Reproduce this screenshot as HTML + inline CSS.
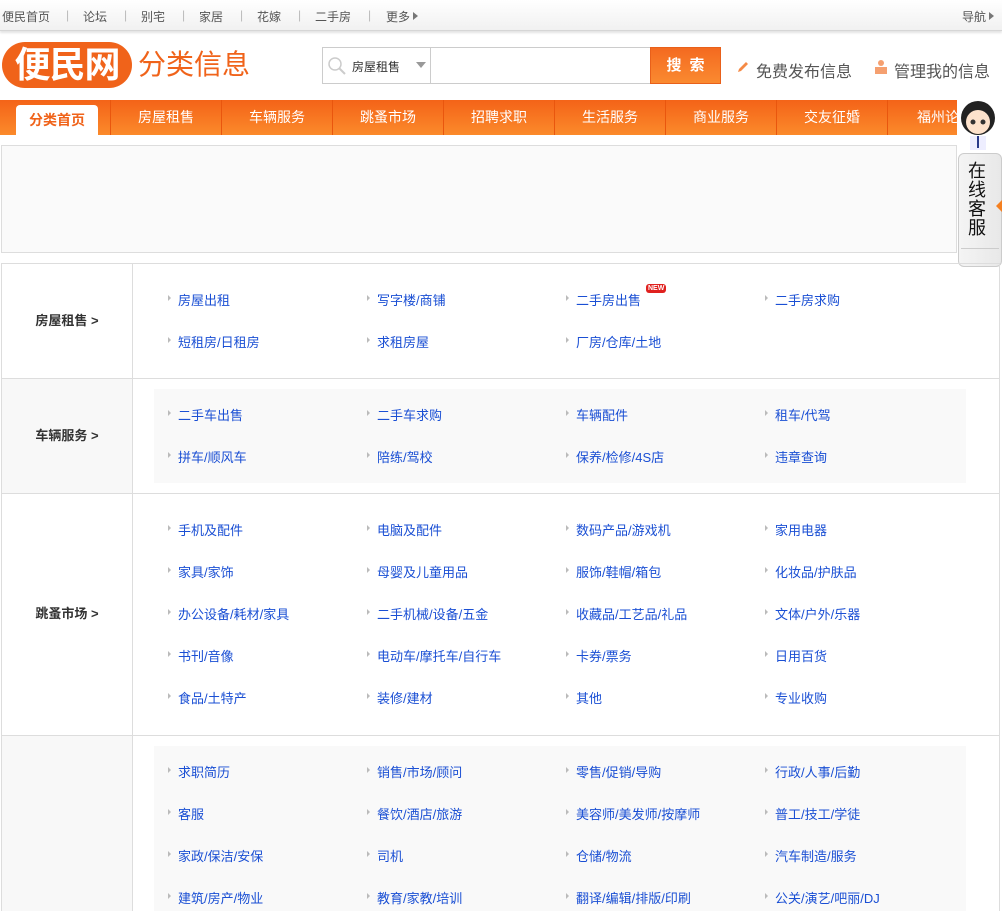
<!DOCTYPE html>
<html style="width:1002px;height:911px;overflow:hidden"><head><meta charset="utf-8"><style>
*{margin:0;padding:0;box-sizing:border-box}
body{width:1002px;height:911px;overflow:hidden;background:#fff;font-family:"Liberation Sans","Noto Sans CJK SC",sans-serif;font-size:12px;color:#333;position:relative}
.a{position:absolute}
.top{left:0;top:0;width:1002px;height:31px;background:linear-gradient(#fff,#f1f1f1);border-bottom:1px solid #d6d6d6;box-shadow:0 2px 2px #e4e4e4}
.top span{position:absolute;top:8px;color:#555;font-size:12px}
.sep{color:#bbb!important}
.tri{display:inline-block;width:0;height:0;border-left:5px solid #777;border-top:4px solid transparent;border-bottom:4px solid transparent;margin-left:3px;vertical-align:1px}
.logo{left:2px;top:42px;width:130px;height:46px;border-radius:23px;background:#f0631a;color:#fff;font-size:36px;font-weight:bold;line-height:46px;text-align:center;letter-spacing:-1px}
.nav{left:0;top:100px;width:957px;height:35px;background:linear-gradient(#f46318,#fb8a2b);overflow:hidden}
.nav span{position:absolute;top:0;width:111px;height:35px;line-height:35px;text-align:center;color:#fff;font-size:14px;border-left:1px solid #e9560e}
.tbl{left:1px;top:263px;width:999px;height:660px;border:1px solid #ddd;border-bottom:none;overflow:hidden}
.row{position:absolute;left:0;width:999px;border-bottom:1px solid #ddd}
.lab{position:absolute;left:0;top:0;width:131px;height:100%;border-right:1px solid #ddd;font-weight:bold;font-size:13px;color:#333;text-align:center}
.it{position:absolute;color:#1a4fd4;font-size:13px;white-space:nowrap}
.it:before{content:"";position:absolute;left:-10px;top:5px;border-left:3px solid #bbb;border-top:3px solid transparent;border-bottom:3px solid transparent}
.gbox{position:absolute;left:152px;background:#f9f9f9;width:812px}
</style></head><body>
<div class="a top">
<span style="left:2px">便民首页</span><span class="sep" style="left:66px">|</span>
<span style="left:83px">论坛</span><span class="sep" style="left:124px">|</span>
<span style="left:141px">别宅</span><span class="sep" style="left:182px">|</span>
<span style="left:199px">家居</span><span class="sep" style="left:240px">|</span>
<span style="left:257px">花嫁</span><span class="sep" style="left:298px">|</span>
<span style="left:315px">二手房</span><span class="sep" style="left:368px">|</span>
<span style="left:386px">更多<i class="tri"></i></span>
<span style="left:962px">导航<i class="tri"></i></span>
</div>
<div class="a logo">便民网</div>
<div class="a" style="left:138px;top:48px;font-size:28px;color:#f0631a;line-height:34px">分类信息</div>
<div class="a" style="left:322px;top:47px;width:330px;height:37px;border:1px solid #ccc;background:#fff">
<svg class="a" style="left:4px;top:8px" width="20" height="20"><circle cx="8" cy="8" r="6" fill="none" stroke="#ccc" stroke-width="1.5"/><line x1="12" y1="12" x2="18" y2="18" stroke="#ccc" stroke-width="2"/></svg>
<span class="a" style="left:29px;top:10px;font-size:12px;color:#333">房屋租售</span>
<span class="a" style="left:93px;top:14px;border-top:6px solid #999;border-left:5px solid transparent;border-right:5px solid transparent"></span>
<span class="a" style="left:107px;top:0;width:1px;height:35px;background:#ccc"></span>
</div>
<div class="a" style="left:650px;top:47px;width:71px;height:37px;background:linear-gradient(#f46a20,#fa8a30);border:1px solid #e8601a;color:#fff;font-size:15px;font-weight:bold;text-align:center;line-height:35px;letter-spacing:8px;padding-left:8px">搜索</div>
<svg class="a" style="left:736px;top:60px" width="14" height="14"><path d="M2 12 L3 9 L10 2 L12 4 L5 11 Z" fill="#f58a46"/></svg>
<div class="a" style="left:756px;top:58px;font-size:16px;color:#555">免费发布信息</div>
<svg class="a" style="left:874px;top:59px" width="14" height="16"><circle cx="7" cy="4" r="3" fill="#f5a070"/><rect x="1" y="8" width="12" height="7" fill="#f5a070"/></svg>
<div class="a" style="left:894px;top:58px;font-size:16px;color:#555">管理我的信息</div>
<div class="a nav">
<div class="a" style="left:16px;top:5px;width:82px;height:30px;background:#fff;border-radius:4px 4px 0 0;color:#f0631a;font-weight:bold;font-size:14px;text-align:center;line-height:31px">分类首页</div>
<span style="left:110px">房屋租售</span><span style="left:221px">车辆服务</span><span style="left:332px">跳蚤市场</span><span style="left:443px">招聘求职</span><span style="left:554px">生活服务</span><span style="left:665px">商业服务</span><span style="left:776px">交友征婚</span><span style="left:887px;width:80px;text-align:left;padding-left:29px;white-space:nowrap">福州论坛</span>
</div>
<div class="a" style="left:1px;top:145px;width:956px;height:108px;background:#fafafa;border:1px solid #ddd"></div>
<svg class="a" style="left:956px;top:100px" width="46" height="52"><ellipse cx="22" cy="18" rx="17" ry="17" fill="#222"/><ellipse cx="22" cy="22" rx="12" ry="12" fill="#fde2cc"/><circle cx="17" cy="22" r="2.5" fill="#333"/><circle cx="27" cy="22" r="2.5" fill="#333"/><rect x="14" y="36" width="16" height="14" fill="#eef"/><line x1="22" y1="36" x2="22" y2="48" stroke="#2a3a8a" stroke-width="2"/></svg>
<div class="a" style="left:958px;top:153px;width:44px;height:114px;background:linear-gradient(90deg,#f4f4f4,#e8e8e8);border:1px solid #ccc;border-radius:6px">
<div style="position:absolute;left:9px;top:8px;width:20px;font-size:18px;line-height:19px;color:#111">在线客服</div>
<div style="position:absolute;left:2px;top:94px;width:38px;height:1px;background:#ccc"></div>
</div>
<div class="a" style="left:996px;top:200px;border-right:6px solid #f58020;border-top:6px solid transparent;border-bottom:6px solid transparent"></div>
<div class="a tbl">
<div class="row" style="top:0;height:115px">
<div class="lab" style="line-height:113px">房屋租售 &gt;</div>
<span class="it" style="left:176px;top:26px">房屋出租</span><span class="it" style="left:375px;top:26px">写字楼/商铺</span><span class="it" style="left:574px;top:26px">二手房出售<b style="position:absolute;left:70px;top:-6px;background:#e0211f;color:#fff;font-size:7px;line-height:9px;padding:0 2px;border-radius:3px">NEW</b></span><span class="it" style="left:773px;top:26px">二手房求购</span>
<span class="it" style="left:176px;top:68px">短租房/日租房</span><span class="it" style="left:375px;top:68px">求租房屋</span><span class="it" style="left:574px;top:68px">厂房/仓库/土地</span>
</div>
<div class="row" style="top:115px;height:115px">
<div class="lab" style="line-height:113px;background:#f8f8f8">车辆服务 &gt;</div>
<div class="gbox" style="top:10px;height:94px"></div>
<span class="it" style="left:176px;top:26px">二手车出售</span><span class="it" style="left:375px;top:26px">二手车求购</span><span class="it" style="left:574px;top:26px">车辆配件</span><span class="it" style="left:773px;top:26px">租车/代驾</span>
<span class="it" style="left:176px;top:68px">拼车/顺风车</span><span class="it" style="left:375px;top:68px">陪练/驾校</span><span class="it" style="left:574px;top:68px">保养/检修/4S店</span><span class="it" style="left:773px;top:68px">违章查询</span>
</div>
<div class="row" style="top:230px;height:242px">
<div class="lab" style="line-height:240px">跳蚤市场 &gt;</div>
<span class="it" style="left:176px;top:26px">手机及配件</span><span class="it" style="left:375px;top:26px">电脑及配件</span><span class="it" style="left:574px;top:26px">数码产品/游戏机</span><span class="it" style="left:773px;top:26px">家用电器</span>
<span class="it" style="left:176px;top:68px">家具/家饰</span><span class="it" style="left:375px;top:68px">母婴及儿童用品</span><span class="it" style="left:574px;top:68px">服饰/鞋帽/箱包</span><span class="it" style="left:773px;top:68px">化妆品/护肤品</span>
<span class="it" style="left:176px;top:110px">办公设备/耗材/家具</span><span class="it" style="left:375px;top:110px">二手机械/设备/五金</span><span class="it" style="left:574px;top:110px">收藏品/工艺品/礼品</span><span class="it" style="left:773px;top:110px">文体/户外/乐器</span>
<span class="it" style="left:176px;top:152px">书刊/音像</span><span class="it" style="left:375px;top:152px">电动车/摩托车/自行车</span><span class="it" style="left:574px;top:152px">卡券/票务</span><span class="it" style="left:773px;top:152px">日用百货</span>
<span class="it" style="left:176px;top:194px">食品/土特产</span><span class="it" style="left:375px;top:194px">装修/建材</span><span class="it" style="left:574px;top:194px">其他</span><span class="it" style="left:773px;top:194px">专业收购</span>
</div>
<div class="row" style="top:472px;height:200px;border-bottom:none">
<div class="lab" style="background:#f8f8f8"></div>
<div class="gbox" style="top:10px;height:200px"></div>
<span class="it" style="left:176px;top:26px">求职简历</span><span class="it" style="left:375px;top:26px">销售/市场/顾问</span><span class="it" style="left:574px;top:26px">零售/促销/导购</span><span class="it" style="left:773px;top:26px">行政/人事/后勤</span>
<span class="it" style="left:176px;top:68px">客服</span><span class="it" style="left:375px;top:68px">餐饮/酒店/旅游</span><span class="it" style="left:574px;top:68px">美容师/美发师/按摩师</span><span class="it" style="left:773px;top:68px">普工/技工/学徒</span>
<span class="it" style="left:176px;top:110px">家政/保洁/安保</span><span class="it" style="left:375px;top:110px">司机</span><span class="it" style="left:574px;top:110px">仓储/物流</span><span class="it" style="left:773px;top:110px">汽车制造/服务</span>
<span class="it" style="left:176px;top:152px">建筑/房产/物业</span><span class="it" style="left:375px;top:152px">教育/家教/培训</span><span class="it" style="left:574px;top:152px">翻译/编辑/排版/印刷</span><span class="it" style="left:773px;top:152px">公关/演艺/吧丽/DJ</span>
</div>
</div>
</body></html>
